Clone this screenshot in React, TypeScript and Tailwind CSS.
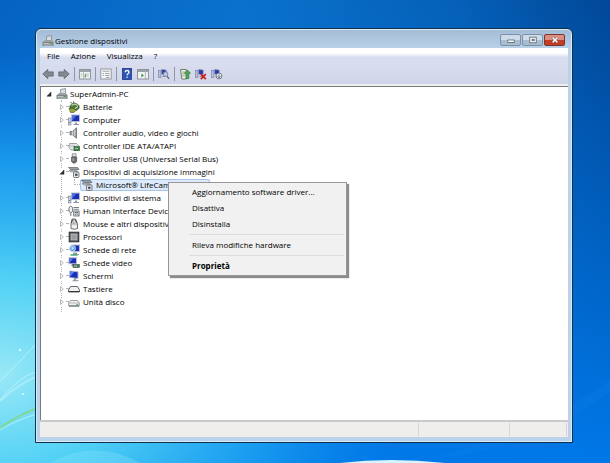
import type { ReactNode } from "react";

type IconName =
  | "pc" | "battery" | "computer" | "speaker" | "ide" | "usb" | "camera" | "hid"
  | "mouse" | "cpu" | "network" | "video" | "screen" | "keyboard" | "disk";

const monitor = (
  <>
    <rect x="3.5" y="1" width="8" height="6.5" fill="#1a2fb4" stroke="#b8bcd4" strokeWidth="1" />
    <path d="M4 7V2h4z" fill="#4a6ee8" />
    <path d="M7 8.5h2v1.5h2v1H5.5v-1H7z" fill="#8f94a8" />
  </>
);

const cameraShape = (
  <>
    <path d="M0.5 1.5h9l1.5 2H2.5z" fill="#9aa0a6" stroke="#5c6268" strokeWidth=".7" />
    <path d="M1 4.5h8l1 1.5H3z" fill="#c6cace" stroke="#70767c" strokeWidth=".6" />
    <rect x="5.5" y="6" width="5.5" height="5.5" rx="1" fill="#e8eaec" stroke="#555b62" strokeWidth=".8" />
    <circle cx="8.3" cy="8.8" r="1.4" fill="#4a5058" />
  </>
);

const shapes: Record<IconName, ReactNode> = {
  pc: (
    <>
      <path d="M4.5 1.5l5-1v5h-5z" fill="#d8dcde" stroke="#83898d" strokeWidth=".8" />
      <path d="M1 7l2-2h7l1.5 2z" fill="#9ba1a4" />
      <rect x=".5" y="7" width="11" height="4" fill="#7b8386" />
      <path d="M1.5 8.5h6M1.5 10h9" stroke="#d8e0dc" strokeWidth=".7" />
      <path d="M9 8.3h1.6" stroke="#58b050" strokeWidth="1" />
    </>
  ),
  battery: (
    <>
      <path d="M4 2.5L2.5 1M6 2L5.5.4" stroke="#38442c" strokeWidth="1" />
      <ellipse cx="6.5" cy="6" rx="4.7" ry="3.6" fill="#4f7b3c" stroke="#2e4724" strokeWidth=".7" />
      <path d="M3.5 4.5c2-1.6 4-1.6 6 0" stroke="#c3dba8" strokeWidth="1.1" fill="none" />
      <path d="M1 7.5h5l2 2-2 2H2.5z" fill="#93a838" stroke="#435422" strokeWidth=".6" />
      <path d="M7 7.5l3-2" stroke="#e0ecd0" strokeWidth="1" />
    </>
  ),
  computer: (
    <>
      {monitor}
      <rect x=".4" y="4" width="2.6" height="7" fill="#c9cfe4" stroke="#7880a4" strokeWidth=".6" />
      <path d="M1 8.5h1.4" stroke="#44a050" strokeWidth="1" />
    </>
  ),
  speaker: (
    <>
      <path d="M2 4.5h2.5L8.5 .8v10.4L4.5 7.8H2z" fill="#9a9ea2" stroke="#63686d" strokeWidth=".8" />
      <path d="M4.5 4.5v3.3M6.7 3v6" stroke="#e4e6e8" strokeWidth=".8" />
    </>
  ),
  ide: (
    <>
      <path d="M1.5 3.5h7l2.5 2.5v4H3L.8 7.5z" fill="#e3e6e6" stroke="#878d8d" strokeWidth=".8" />
      <path d="M1 6h6" stroke="#a8b0ae" strokeWidth=".8" />
      <rect x="6" y="6.5" width="5.5" height="4.2" fill="#3f7f4b" stroke="#285a34" strokeWidth=".6" />
      <path d="M7 8.5h3" stroke="#b8dcb0" strokeWidth=".8" />
    </>
  ),
  usb: (
    <>
      <rect x="4.2" y=".8" width="3.8" height="3" fill="#e0e2e4" stroke="#777b80" strokeWidth=".7" />
      <path d="M3.5 4h5.2v4.4L7.2 10H5L3.5 8.4z" fill="#6c7075" stroke="#404448" strokeWidth=".6" />
      <path d="M5.2 5v3M6.1 10v1.6" stroke="#babec2" strokeWidth=".9" />
    </>
  ),
  camera: cameraShape,
  hid: (
    <>
      <path d="M1 2.5Q2.8-.2 4.6 2.5v4Q2.8 9 1 6.5z" fill="#f3f3f3" stroke="#54585c" strokeWidth=".8" />
      <path d="M2.8 8v3" stroke="#54585c" strokeWidth=".8" />
      <path d="M5.5 2.5H11M5.5 4.3H11" stroke="#6c7278" strokeWidth=".9" />
      <rect x="5.7" y="6" width="5.4" height="5" fill="#d2d6da" stroke="#62686e" strokeWidth=".8" />
      <path d="M7 7.5h3M7 9.3h1M9.2 9.3h1" stroke="#484e54" strokeWidth=".8" />
    </>
  ),
  mouse: (
    <>
      <path d="M4 1h3.5l2 5v4.5q-3 1.6-6.5 0V6z" fill="#eeeeee" stroke="#5a5d60" strokeWidth=".9" />
      <path d="M5.8 1v5M3.4 6h5.8" stroke="#7a7d80" strokeWidth=".7" />
      <path d="M4.7 1.5L3.5 5M7.2 1.5l1.3 3.5" stroke="#2a2c2e" strokeWidth=".8" />
    </>
  ),
  cpu: (
    <>
      <rect x="1.2" y="1.2" width="9.6" height="9.6" fill="#4a4d50" stroke="#2e3032" strokeWidth="1" />
      <rect x="3" y="3" width="6" height="6" fill="#989c9e" stroke="#c9cccd" strokeWidth=".7" />
    </>
  ),
  network: (
    <>
      {monitor}
      <circle cx="4.5" cy="4.5" r="3" fill="#5f9ae8" stroke="#d4e4fc" strokeWidth=".8" />
      <path d="M3 3.5l2-.8.8 2-1.8 1z" fill="#cdeedd" />
      <path d="M6 8.5v2M2.5 11h7" stroke="#4aa878" strokeWidth="1.5" />
    </>
  ),
  video: (
    <>
      <rect x="1" y=".8" width="7.5" height="6" fill="#1a2fb4" stroke="#b8bcd4" strokeWidth="1" />
      <path d="M1.5 6V1.5h3.6z" fill="#5a7cf0" />
      <path d="M4 7h2v2H3z" fill="#8f94a8" />
      <rect x="5" y="7.5" width="6.3" height="3" fill="#4c7860" stroke="#304c40" strokeWidth=".6" />
      <path d="M6 9h3" stroke="#cfe4c8" strokeWidth=".8" />
    </>
  ),
  screen: (
    <>
      <path d="M1.5 1l8.5.8v6.7l-8.5-1z" fill="#1830b8" stroke="#b4b8d0" strokeWidth=".9" />
      <path d="M2 6.8V1.6l4.2.4z" fill="#5d80f0" />
      <path d="M6 8.2h2v1.6l2.5.4v1H4.5v-1L6 9.8z" fill="#9a9eb0" />
    </>
  ),
  keyboard: (
    <>
      <path d="M2.5 3.5h7l2 3.5v2H.5V7z" fill="#f2f2f2" stroke="#55585b" strokeWidth=".9" />
      <path d="M.8 8.5h10.4" stroke="#333638" strokeWidth="1" />
    </>
  ),
  disk: (
    <>
      <path d="M2.5 4.5h7l1.8 2.5v3H.7V7z" fill="#f0f0f0" stroke="#85898c" strokeWidth=".8" />
      <path d="M.8 7h10.4" stroke="#a2a6a8" strokeWidth=".7" />
      <path d="M1 10h10" stroke="#55595c" strokeWidth=".9" />
      <path d="M8.3 8.6h1.8" stroke="#48a048" strokeWidth="1" />
    </>
  ),
};

function Glyph({ children }: { children: ReactNode }) {
  return (
    <svg viewBox="0 0 12 12" className="size-3 shrink-0" fill="none" aria-hidden="true">
      {children}
    </svg>
  );
}

function Expander({ open }: { open?: boolean }) {
  return (
    <button aria-label={open ? "Comprimi" : "Espandi"} className="flex size-2 shrink-0 items-center justify-center bg-white">
      <svg viewBox="0 0 8 8" className="size-2" fill="none" aria-hidden="true">
        {open ? (
          <path d="M6 2v4.2H2z" fill="#333" stroke="#222" strokeWidth=".5" />
        ) : (
          <path d="M2.5 1.5L5.3 4 2.5 6.5z" fill="#fff" stroke="#a6a6a6" strokeWidth=".8" />
        )}
      </svg>
    </button>
  );
}

const devices: { icon: IconName; label: string; child?: string }[] = [
  { icon: "battery", label: "Batterie" },
  { icon: "computer", label: "Computer" },
  { icon: "speaker", label: "Controller audio, video e giochi" },
  { icon: "ide", label: "Controller IDE ATA/ATAPI" },
  { icon: "usb", label: "Controller USB (Universal Serial Bus)" },
  { icon: "camera", label: "Dispositivi di acquisizione immagini", child: "Microsoft® LifeCam HD-3000" },
  { icon: "computer", label: "Dispositivi di sistema" },
  { icon: "hid", label: "Human Interface Device" },
  { icon: "mouse", label: "Mouse e altri dispositivi" },
  { icon: "cpu", label: "Processori" },
  { icon: "network", label: "Schede di rete" },
  { icon: "video", label: "Schede video" },
  { icon: "screen", label: "Schermi" },
  { icon: "keyboard", label: "Tastiere" },
  { icon: "disk", label: "Unità disco" },
];

function MenuItem({ children, bold }: { children: ReactNode; bold?: boolean }) {
  return (
    <button role="menuitem" className={`block h-4 w-full pl-[22px] text-left ${bold ? "font-bold" : ""}`}>
      {children}
    </button>
  );
}

function ContextMenu() {
  return (
    <div
      role="menu"
      className="absolute top-1 left-[106px] z-10 w-[179px] border border-[#979797] bg-[#f1f1f1] p-px leading-4 shadow-[2px_2px_1px_rgba(0,0,0,0.45)]"
    >
      <MenuItem>Aggiornamento software driver...</MenuItem>
      <MenuItem>Disattiva</MenuItem>
      <MenuItem>Disinstalla</MenuItem>
      <hr className="my-[2px] mr-px ml-[19px] border-[#dcdcdc]" />
      <MenuItem>Rileva modifiche hardware</MenuItem>
      <hr className="my-[2px] mr-px ml-[19px] border-[#dcdcdc]" />
      <MenuItem bold>Proprietà</MenuItem>
    </div>
  );
}

function Tree() {
  return (
    <div className="flex-1 border-t border-l border-[#77797d] bg-white">
      <div className="flex h-[13px] items-center pl-1">
        <Expander open />
        <span className="ml-[3px] flex items-center gap-[2px]">
          <Glyph>{shapes.pc}</Glyph>SuperAdmin-PC
        </span>
      </div>
      <ul className="ml-5 border-l border-dotted border-[#b4b4b4] pb-1">
        {devices.map((d) => (
          <li key={d.label}>
            <div className="-ml-1 flex h-[13px] items-center">
              <Expander open={!!d.child} />
              <span className="w-[2px] border-t border-dotted border-[#b4b4b4]" />
              <span className="flex items-center gap-[3px]">
                <Glyph>{shapes[d.icon]}</Glyph>
                {d.label}
              </span>
            </div>
            {d.child && (
              <div className="relative flex h-[13px] items-center pl-3">
                <span className="mb-[6px] h-[6px] w-[6px] border-b border-l border-dotted border-[#b4b4b4]" />
                <span className="flex h-3 items-center gap-[3px] rounded-xs border border-[#a5c4e8] bg-[#dceafb] pr-1">
                  <Glyph>{shapes.camera}</Glyph>
                  {d.child}
                </span>
                <ContextMenu />
              </div>
            )}
          </li>
        ))}
      </ul>
    </div>
  );
}

function Tool({ label, children }: { label: string; children: ReactNode }) {
  return (
    <button aria-label={label} title={label}>
      <Glyph>{children}</Glyph>
    </button>
  );
}

const Sep = () => <span className="h-[14px] w-px bg-[#8e95ad]" />;

const arrow = "M.8 6L5.8 1.4v2.5h5.4v4.2H5.8v2.5z";
const smallPc = (
  <>
    <rect x=".6" y="2.5" width="2.4" height="7" fill="#b8bfd8" stroke="#717a9c" strokeWidth=".6" />
    <path d="M3.6 1.5l4.6.6v4.6l-4.6-.6z" fill="#2838a4" stroke="#8c94bc" strokeWidth=".7" />
    <path d="M4.5 8.5h3" stroke="#8a90ac" strokeWidth="1" />
  </>
);

function Toolbar() {
  return (
    <div className="flex h-5 items-center gap-1 bg-linear-to-b from-[#d9ddee] to-[#cfd4e8] pl-[2px]">
      <Tool label="Indietro"><path d={arrow} fill="#858a92" stroke="#5f646c" strokeWidth=".8" /></Tool>
      <Tool label="Avanti"><path d={arrow} transform="rotate(180 6 6)" fill="#858a92" stroke="#5f646c" strokeWidth=".8" /></Tool>
      <Sep />
      <Tool label="Mostra albero">
        <rect x=".6" y="1.5" width="10.8" height="9.5" fill="#f4f5f6" stroke="#848a92" strokeWidth=".9" />
        <path d="M1 3h10" stroke="#9ba2ac" strokeWidth="2" />
        <path d="M4.5 4v7M6 6h4M6 8h4M1.8 6h1.5M1.8 8h1.5" stroke="#9aa4a2" strokeWidth=".7" />
        <path d="M6.3 6.2v3.2" stroke="#57a350" strokeWidth="1.3" />
      </Tool>
      <Sep />
      <Tool label="Proprietà">
        <rect x=".8" y="1" width="10.4" height="10" fill="#f6f7f8" stroke="#8a9098" strokeWidth=".9" />
        <path d="M2.5 3.2h7M2.5 5.5H4M5 5.5h4.5M2.5 7.5H4M5 7.5h4.5M6 9.5h3.5" stroke="#8a9098" strokeWidth=".8" />
      </Tool>
      <Sep />
      <Tool label="Guida">
        <rect x="1.5" y=".5" width="9" height="11" fill="#2d53b4" stroke="#1b3888" strokeWidth=".8" />
        <path d="M4.2 4.2q0-1.7 1.9-1.7T8 4.1q0 1-1 1.6t-.9 1.6M6.1 8.4v1.4" stroke="#fff" strokeWidth="1.3" />
      </Tool>
      <Tool label="Mostra riquadro azioni">
        <rect x=".6" y="1.5" width="10.8" height="9.5" fill="#f4f5f6" stroke="#848a92" strokeWidth=".9" />
        <path d="M1 3h10" stroke="#9ba2ac" strokeWidth="2" />
        <path d="M8.4 4v7" stroke="#9aa0a6" strokeWidth=".8" />
        <path d="M4.3 5.5L7 7.5 4.3 9.5z" fill="#4b9a48" />
      </Tool>
      <Sep />
      <Tool label="Rileva modifiche hardware">
        {smallPc}
        <circle cx="7.5" cy="6" r="2.3" fill="#cfd8ec" fillOpacity=".8" stroke="#6b7290" strokeWidth=".8" />
        <path d="M9 8l2 2.8" stroke="#555c78" strokeWidth="1.2" />
      </Tool>
      <Sep />
      <Tool label="Aggiorna driver">
        <path d="M1.5 1.5h5.8V11H2.8z" fill="#eef4ec" stroke="#5d7562" strokeWidth=".9" />
        <path d="M2.8 4h3M3 6h3M3.2 8h2.5" stroke="#7b9480" strokeWidth=".8" />
        <path d="M7 10.5V5.2H5.4L8.4 2l3 3.2H9.8v5.3z" fill="#55a655" stroke="#2f7436" strokeWidth=".7" />
      </Tool>
      <Tool label="Disinstalla">
        {smallPc}
        <path d="M5.8 6.1l5 5M10.8 6.1l-5 5" stroke="#c62222" strokeWidth="1.8" />
      </Tool>
      <Tool label="Disattiva">
        {smallPc}
        <circle cx="8" cy="8" r="2.9" fill="#e8ebf2" stroke="#6a7080" strokeWidth=".9" />
        <path d="M8 9.8V6.5M6.6 8.4L8 9.8l1.4-1.4" stroke="#4c5260" strokeWidth=".8" />
      </Tool>
    </div>
  );
}

function TitleBar() {
  return (
    <header className="flex h-[19px] items-center pt-[5px] pr-[3px] pl-[2px]">
      <Glyph>{shapes.pc}</Glyph>
      <h1 className="ml-px flex-1">Gestione dispositivi</h1>
      <div className="flex gap-px pb-[2px]">
        <button aria-label="Riduci a icona" className="flex h-3 w-[21px] items-center justify-center rounded-xs border border-[#7d90a4] bg-linear-to-b from-[#cddbea] from-50% to-[#a9bdd2] to-50%">
          <svg viewBox="0 0 8 8" className="size-2" aria-hidden="true"><rect x=".8" y="4" width="6.4" height="2.4" fill="#fff" stroke="#55606c" strokeWidth=".8" /></svg>
        </button>
        <button aria-label="Ingrandisci" className="flex h-3 w-[21px] items-center justify-center rounded-xs border border-[#7d90a4] bg-linear-to-b from-[#cddbea] from-50% to-[#a9bdd2] to-50%">
          <svg viewBox="0 0 8 8" className="size-2" aria-hidden="true"><rect x=".8" y="1.2" width="6.4" height="5.6" fill="#fff" stroke="#55606c" strokeWidth=".8" /><rect x="3" y="3.2" width="2.2" height="1.6" fill="#8ba0b8" stroke="#55606c" strokeWidth=".7" /></svg>
        </button>
        <button aria-label="Chiudi" className="flex h-3 w-[21px] items-center justify-center rounded-xs border border-[#7b352c] bg-linear-to-b from-[#dc8f80] from-50% to-[#c23d26] to-50%">
          <svg viewBox="0 0 8 8" className="size-2" aria-hidden="true"><path d="M1.6 1.6l4.8 4.8M6.4 1.6L1.6 6.4" stroke="#5b3a3a" strokeWidth="2.6" /><path d="M1.6 1.6l4.8 4.8M6.4 1.6L1.6 6.4" stroke="#fff" strokeWidth="1.5" /></svg>
        </button>
      </div>
    </header>
  );
}

function Wallpaper() {
  return (
    <svg viewBox="0 0 610 463" preserveAspectRatio="none" className="absolute inset-0 -z-10 size-full" aria-hidden="true">
      <defs>
        <linearGradient id="base" x1="0" y1="0" x2="1" y2="0">
          <stop offset="0" stopColor="#0563c2" />
          <stop offset=".4" stopColor="#0a72cc" />
          <stop offset=".75" stopColor="#0560b8" />
          <stop offset="1" stopColor="#014796" />
        </linearGradient>
        <linearGradient id="low" x1="0" y1="0" x2="0" y2="1">
          <stop offset="0" stopColor="#0078e8" stopOpacity="0" />
          <stop offset="1" stopColor="#0078e8" />
        </linearGradient>
        <radialGradient id="glow" gradientUnits="userSpaceOnUse" cx="0" cy="0" r="1" gradientTransform="translate(0 375) scale(420 330)">
          <stop offset="0" stopColor="#98e8f6" />
          <stop offset=".3" stopColor="#4fd0f5" />
          <stop offset=".65" stopColor="#1ea4f2" stopOpacity=".8" />
          <stop offset="1" stopColor="#0a80e8" stopOpacity="0" />
        </radialGradient>
      </defs>
      <rect width="610" height="463" fill="url(#base)" />
      <rect width="610" height="463" fill="url(#low)" />
      <rect width="610" height="463" fill="url(#glow)" />
      <path d="M0 401Q20 382 50 370" stroke="#b8f2fa" strokeWidth="2" fill="none" opacity=".6" />
      <path d="M0 381Q18 364 36 344M0 400Q20 376 36 372" stroke="#c8f6fc" strokeWidth="1" fill="none" opacity=".7" />
      <path d="M0 428Q16 416 40 407" stroke="#7fd89c" strokeWidth="2" fill="none" />
      <path d="M0 430Q16 420 40 413" stroke="#c8f6fc" strokeWidth="1" fill="none" opacity=".7" />
      <circle cx="20" cy="350" r="1.2" fill="#d8fbff" />
      <circle cx="23" cy="394" r="1" fill="#d8fbff" />
      <path d="M50 463Q95 438 140 463z" fill="#8fe4fb" opacity=".3" />
      <path d="M340 463Q390 457 445 463z" fill="#d4f4ff" />
      <path d="M440 455Q540 430 610 380V392Q550 436 460 457z" fill="#1e90f4" opacity=".15" />
    </svg>
  );
}

export default function App() {
  return (
    <main className="relative isolate flex min-h-screen flex-col overflow-hidden pt-7 pr-[37px] pb-5 pl-[35px] font-['Open_Sans','Noto_Sans',sans-serif] text-[8px] leading-3 text-black">
      <Wallpaper />
      <section className="flex flex-1 flex-col rounded-t-md border border-[#12304c] bg-linear-to-b from-[#a3bbd4] to-[#bad2ea] to-5% px-1 pb-[5px] whitespace-nowrap inset-ring inset-ring-[#d8ecf8]">
        <TitleBar />
        <nav className="flex h-4 items-center gap-[11px] bg-linear-to-b from-white from-30% to-[#d8ddef] to-60% pl-[7px]">
          <button>File</button>
          <button>Azione</button>
          <button>Visualizza</button>
          <button>?</button>
        </nav>
        <Toolbar />
        <div className="h-[2px] bg-[#f0f0f0]" />
        <Tree />
        <footer className="flex h-[17px] border-t-2 border-[#c9c9c7] bg-[#f0eeed] pr-px">
          <div className="flex-1" />
          <div className="my-px w-[91px] border-l border-[#d6d4d3]" />
          <div className="my-px w-[58px] border-x border-[#d6d4d3]" />
        </footer>
      </section>
    </main>
  );
}
